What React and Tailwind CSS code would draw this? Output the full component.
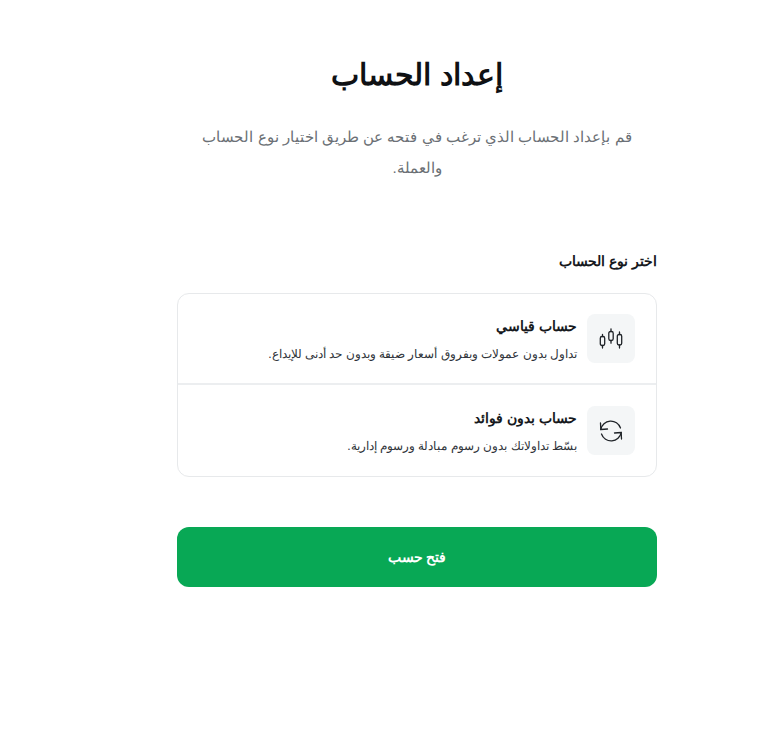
const accounts = [
  {
    title: "حساب قياسي",
    desc: "تداول بدون عمولات وبفروق أسعار ضيقة وبدون حد أدنى للإيداع.",
    icon: <CandlesIcon />,
  },
  {
    title: "حساب بدون فوائد",
    desc: "بسّط تداولاتك بدون رسوم مبادلة ورسوم إدارية.",
    icon: <SwapIcon />,
  },
];

function CandlesIcon() {
  return (
    <svg width="24" height="24" viewBox="0 0 24 24" fill="none" stroke="#1f2328" strokeWidth="1.3" strokeLinecap="round">
      <rect x="1.3" y="9.5" width="4.4" height="9" rx="1.7" />
      <path d="M3.5 7.5v2M3.5 18.5v2.5" />
      <rect x="9.8" y="4.5" width="4.4" height="9" rx="1.7" />
      <path d="M12 1.8v2.7M12 13.5v2.7" />
      <rect x="18.3" y="7.5" width="4.4" height="10.5" rx="1.7" />
      <path d="M20.5 5v2.5M20.5 18v3" />
    </svg>
  );
}

function SwapIcon() {
  return (
    <svg width="24" height="24" viewBox="0 0 24 24" fill="none" stroke="#1f2328" strokeWidth="1.3" strokeLinecap="round" strokeLinejoin="round">
      <path d="M1.8 10.5A10.2 10.2 0 0 1 21.5 9" />
      <path d="M1.5 4L1.8 10.5L8.5 10" />
      <path d="M22.2 13.5A10.2 10.2 0 0 1 2.5 15" />
      <path d="M22.5 20L22.2 13.5L15.5 14" />
    </svg>
  );
}

function AccountRow({ title, desc, icon, last }) {
  return (
    <div className={`flex h-[91px] items-center gap-[10px] pl-4 pr-[21px] ${last ? "" : "border-b-2 border-[#eceef0]"}`}>
      <div className="flex h-[49px] w-[48px] shrink-0 items-center justify-center rounded-lg bg-[#f4f6f7]">{icon}</div>
      <div className="min-w-0 flex-1 pt-[3px]">
        <div className="text-[13.5px] leading-5 font-bold text-[#16191d]">{title}</div>
        <div className="mt-[7px] text-[12.2px] leading-5 text-[#30353a]">{desc}</div>
      </div>
    </div>
  );
}

export default function App() {
  return (
    <div dir="rtl" className="min-h-[732px] bg-white pt-[50px] pl-[102px] font-['Liberation_Sans',Arial,sans-serif]">
      <div className="mr-[102px] w-[480px]">
        <h1 className="text-center text-[30.4px] leading-[48px] font-bold text-[#0f1114]">إعداد الحساب</h1>
        <p className="mx-auto mt-[23px] w-[450px] text-center text-[15.2px] leading-[31px] text-[#6b7075]">
          قم بإعداد الحساب الذي ترغب في فتحه عن طريق اختيار نوع الحساب والعملة.
        </p>
        <h2 className="mt-[68px] text-[14px] leading-5 font-bold text-[#16191d]">اختر نوع الحساب</h2>
        <div className="mt-[22px] overflow-hidden rounded-xl border border-[#e7e9eb]">
          {accounts.map((a, i) => (
            <AccountRow key={a.title} {...a} last={i === accounts.length - 1} />
          ))}
        </div>
        <button type="button" className="mt-[50px] h-[60px] w-full rounded-xl bg-[#08a855] text-[14px] font-bold text-white">
          فتح حسب
        </button>
      </div>
    </div>
  );
}
